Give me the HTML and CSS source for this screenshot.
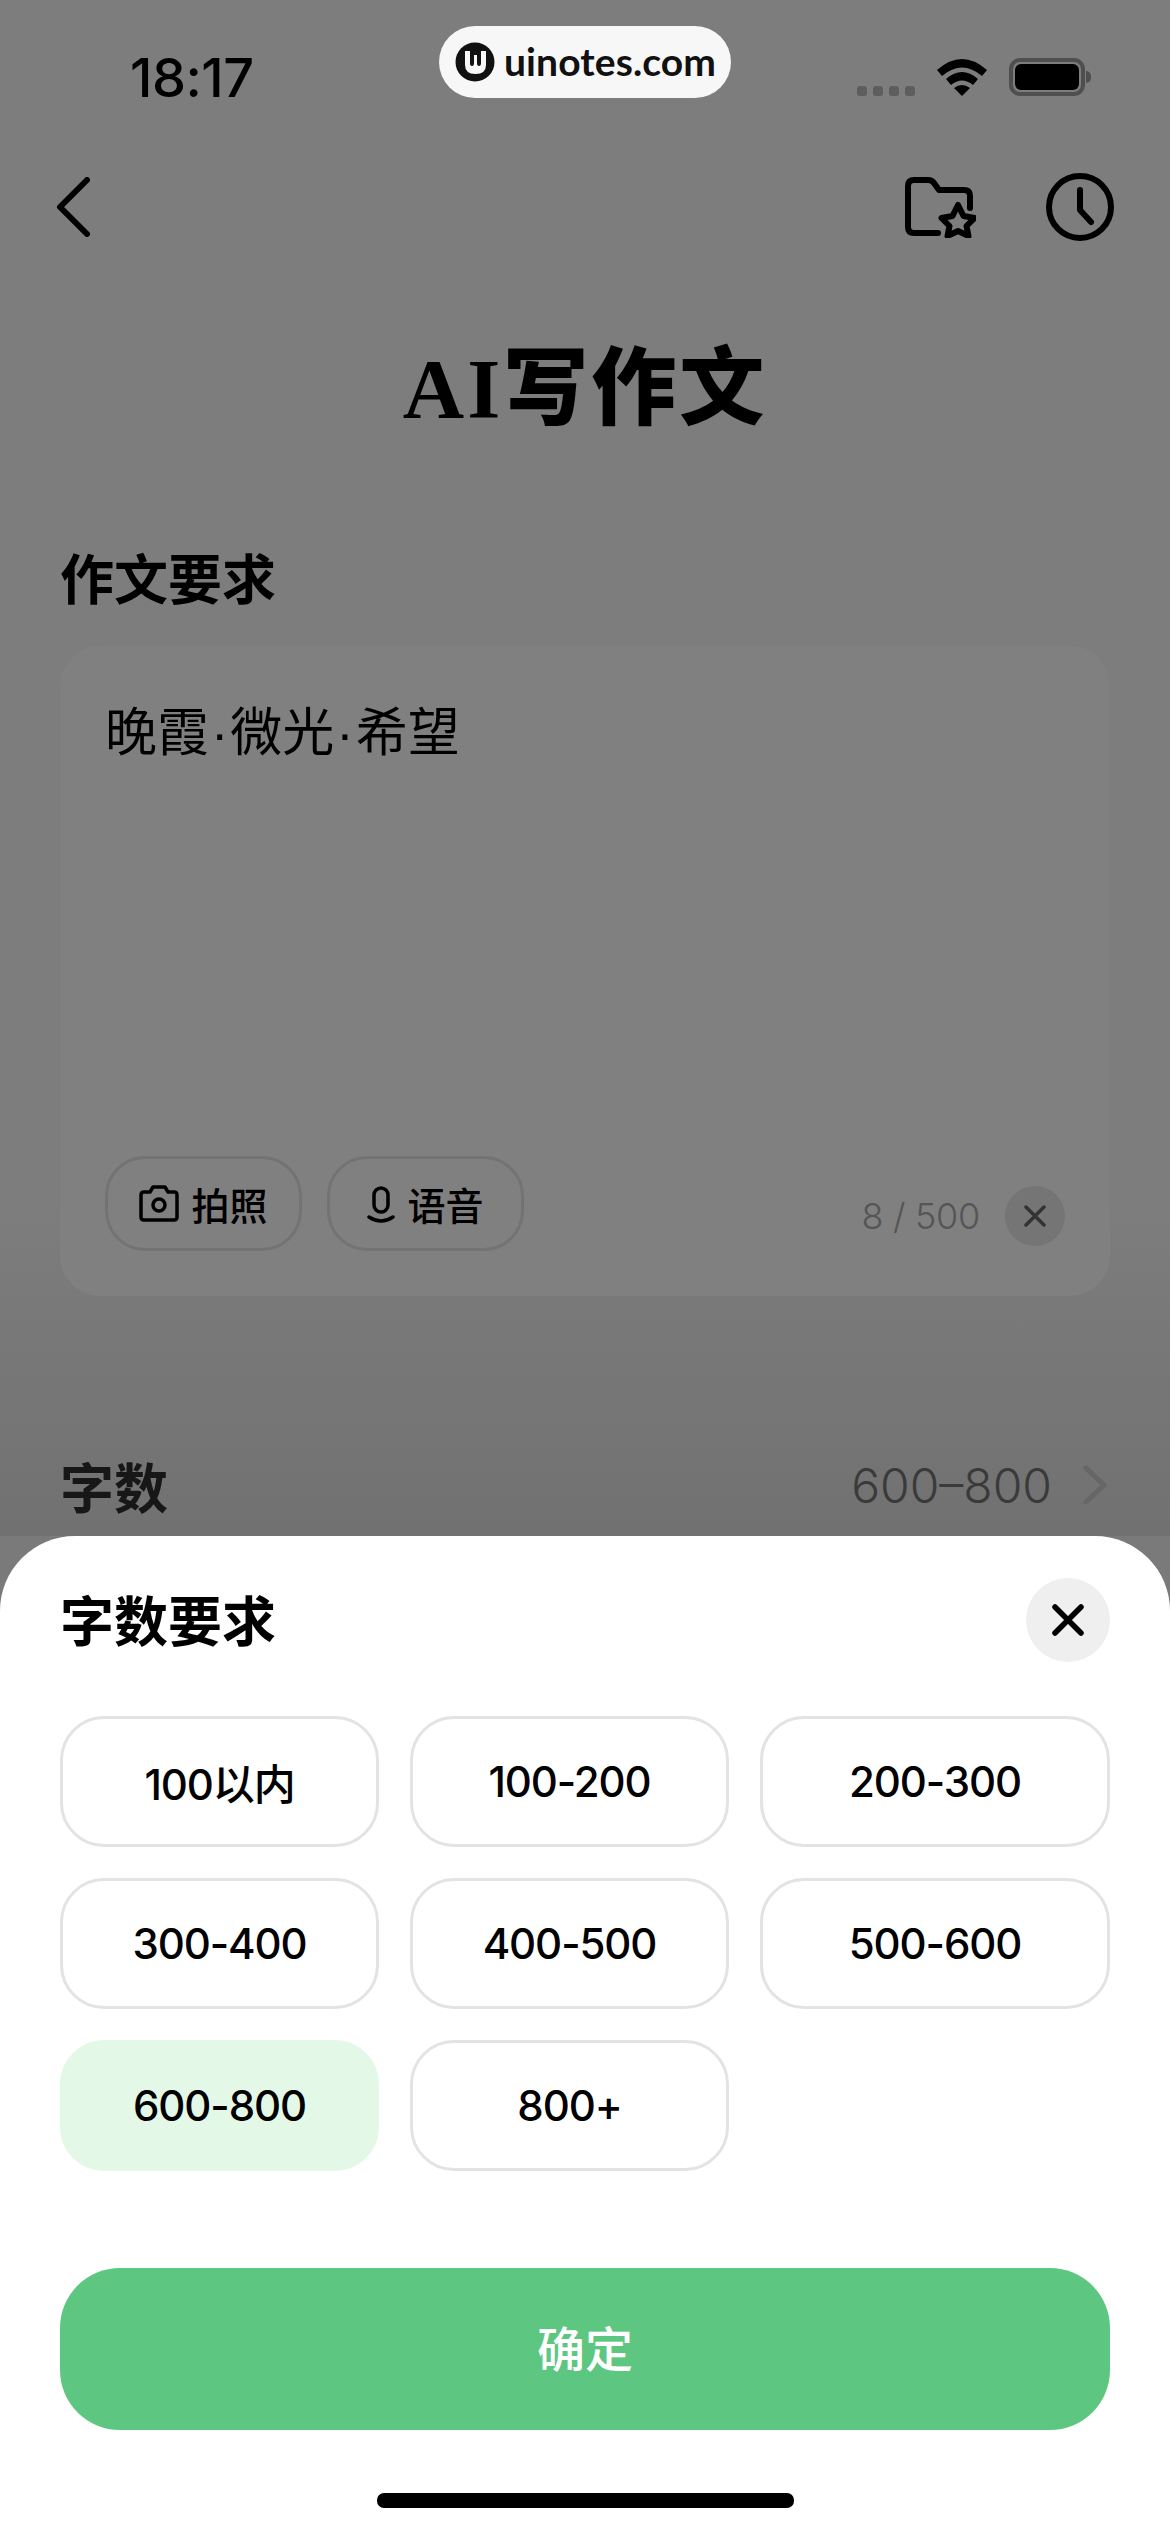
FILE: index.html
```html
<!DOCTYPE html>
<html lang="zh-CN">
<head>
<meta charset="utf-8">
<title>AI写作文</title>
<link rel="stylesheet" href="styles.css">
</head>
<body>
<div class="screen">
  <div class="page">
    <header class="status">
      <span class="time">18:17</span>
      <div class="mark"><svg class="mark-logo" viewBox="0 0 40 40"><circle cx="20" cy="20" r="19.5" fill="#111"/><path d="M10 9h5v12q0 3 2 3t2-3V13h3v8q0 3 2 3t2-3V9h5v14q0 9-10.500 9T10 23z" fill="#f7f7f7"/></svg><span>uinotes.com</span></div>
      <div class="status-icons">
        <div class="dots"><i></i><i></i><i></i><i></i></div>
        <svg class="wifi" viewBox="0 0 50 37"><path d="M0 11Q25-11 50 11l-5 6Q25 0 5 17z"/><path d="M9 20Q25 6 41 20l-5 6Q25 17 14 26z"/><path d="M17 29q8-6 16 0l-8 8z"/></svg>
        <div class="battery"><div class="battery-fill"></div></div>
        <div class="battery-cap"></div>
      </div>
    </header>
    <nav class="nav">
      <svg class="back" viewBox="0 0 34 60"><path d="M31 3 4 30l27 27"/></svg>
      <div class="nav-right">
        <svg class="folder" viewBox="0 0 71 61"><path d="M33 56H9q-6 0-6-6V9q0-6 6-6h14q4 0 6 3l5 7h25q6 0 6 6v12"/><path d="m53 28 5.500 11 11 2-8 8 2 10-10.500-5-10.500 5 2-10-8-8 11-2z"/></svg>
        <svg class="clock" viewBox="0 0 68 68"><circle cx="34" cy="34" r="31"/><path d="M34 17v20l11 12"/></svg>
      </div>
    </nav>
    <h1 class="title">AI写作文</h1>
    <h2 class="section">作文要求</h2>
    <div class="card">
      <p class="prompt">晚霞<b>·</b>微光<b>·</b>希望</p>
      <div class="card-foot">
        <button class="tool"><svg class="cam" viewBox="0 0 40 37"><path d="M5 7h6l3-5h12l3 5h6q3 0 3 3v22q0 3-3 3H5q-3 0-3-3V10q0-3 3-3z"/><circle cx="20" cy="20" r="6"/></svg>拍照</button>
        <button class="tool tool-voice"><svg class="mic" viewBox="0 0 28 38"><path d="M7 10a7 7 0 0 1 14 0v10a7 7 0 0 1-14 0z"/><path d="M2 32q12 8 24 0"/></svg>语音</button>
        <span class="count">8 / 500</span>
        <span class="clear"><svg viewBox="0 0 22 22"><path d="m2 2 18 18M20 2 2 20"/></svg></span>
      </div>
    </div>
    <div class="row">
      <span class="row-label">字数</span>
      <span class="row-value">600–800</span>
      <svg class="chev" viewBox="0 0 24 40"><path d="m3 3 18 17L3 37"/></svg>
    </div>
  </div>
  <section class="sheet">
    <div class="sheet-head">
      <h2 class="sheet-title">字数要求</h2>
      <span class="close"><svg viewBox="0 0 32 32"><path d="m3 3 26 26M29 3 3 29"/></svg></span>
    </div>
    <div class="options">
      <div class="opt">100以内</div>
      <div class="opt">100-200</div>
      <div class="opt">200-300</div>
      <div class="opt">300-400</div>
      <div class="opt">400-500</div>
      <div class="opt">500-600</div>
      <div class="opt opt-on">600-800</div>
      <div class="opt">800+</div>
    </div>
    <button class="ok">确定</button>
    <div class="home"></div>
  </section>
</div>
</body>
</html>
```
FILE: styles.css
```css
* { box-sizing: border-box; }
html, body { margin: 0; padding: 0; }
body { font-family: Inter, "Noto Sans CJK SC", sans-serif; background: #7a7a7a; }
h1, h2, p { margin: 0; font-weight: inherit; }
.screen { width: 1170px; height: 2532px; display: flex; flex-direction: column; overflow: hidden; }
.page { height: 1536px; flex: none; padding: 26px 60px 0; background: linear-gradient(#7d7d7d 0, #7d7d7d 1200px, #717171 1536px); }
.status { display: flex; align-items: flex-start; height: 72px; margin: 0 19px 0 0; }
.time { width: 380px; padding: 27px 0 0 70px; font-size: 54px; line-height: 50px; font-weight: 500; color: #000; letter-spacing: -.5px; }
.mark { width: 292px; height: 72px; flex: none; margin-left: -1px; border-radius: 36px; background: #f7f7f7; display: flex; align-items: center; gap: 9px; padding: 0 0 2px 16px; font-family: Lato, sans-serif; font-weight: 700; font-size: 39px; color: #111; letter-spacing: .1px; }
.mark-logo { width: 40px; height: 40px; flex: none; margin-top: 2px; }
.status-icons { display: flex; align-items: flex-end; margin-left: auto; height: 70px; }
.dots { display: flex; gap: 6px; margin-right: 22px; }
.dots i { width: 10px; height: 10px; border-radius: 3px; background: #5e5e5e; }
.wifi { width: 50px; height: 37px; fill: #000; margin-right: 22px; }
.battery { width: 76px; height: 38px; border: 4px solid #4f4f4f; border-radius: 11px; padding: 2px; }
.battery-fill { height: 100%; background: #000; border-radius: 6px; }
.battery-cap { width: 5px; height: 12px; margin: 0 0 13px 1px; background: #4f4f4f; border-radius: 0 6px 6px 0; }
.nav { display: flex; align-items: center; justify-content: space-between; height: 70px; margin: 74px -4px 0 -4px; }
.back { width: 34px; height: 60px; fill: none; stroke: #000; stroke-width: 6; stroke-linecap: round; stroke-linejoin: round; }
.nav-right { display: flex; align-items: center; gap: 70px; }
.folder { width: 71px; height: 61px; fill: none; stroke: #000; stroke-width: 6; stroke-linecap: round; stroke-linejoin: round; }
.clock { width: 68px; height: 68px; fill: none; stroke: #000; stroke-width: 6; stroke-linecap: round; stroke-linejoin: round; }
.title { margin-top: 97px; text-align: center; font-family: "Liberation Serif", "Noto Sans CJK SC", serif; font-weight: 900; font-size: 85px; line-height: 100px; letter-spacing: 3px; color: #000; }
.section { margin-top: 107px; font-size: 54px; line-height: 70px; font-weight: 700; color: #000; }
.card { height: 650px; margin-top: 30px; padding: 52px 45px 45px 45px; border-radius: 40px; background: #808080; display: flex; flex-direction: column; justify-content: space-between; }
.prompt { font-size: 52px; line-height: 70px; color: #000; }
.prompt b { font-weight: 400; font-family: "Liberation Sans", sans-serif; padding: 0 2px; }
.card-foot { display: flex; align-items: flex-end; gap: 25px; }
.tool { width: 197px; height: 95px; border: 3px solid #737373; border-radius: 40px; background: transparent; padding: 0; display: flex; align-items: center; justify-content: center; gap: 12px; font-family: inherit; font-size: 38px; color: #000; font-weight: 500; }
.cam { width: 40px; height: 37px; fill: none; stroke: #000; stroke-width: 3.500; stroke-linecap: round; stroke-linejoin: round; }
.mic { width: 28px; height: 38px; fill: none; stroke: #000; stroke-width: 3.500; stroke-linecap: round; }
.count { margin-left: auto; margin-bottom: 5px; font-size: 36px; line-height: 60px; font-weight: 300; color: #555; letter-spacing: -.3px; }
.clear { width: 60px; height: 60px; margin-bottom: 5px; border-radius: 50%; background: #757575; display: flex; align-items: center; justify-content: center; }
.clear svg { width: 22px; height: 22px; fill: none; stroke: #333; stroke-width: 3.500; stroke-linecap: round; }
.row { display: flex; align-items: center; margin-top: 154px; height: 70px; }
.row-label { font-size: 54px; font-weight: 700; color: #171717; }
.row-value { margin-left: auto; font-size: 48px; font-weight: 300; color: #3a3a3a; }
.chev { width: 24px; height: 40px; margin-left: 31px; margin-right: 3px; fill: none; stroke: #666; stroke-width: 5; stroke-linecap: round; stroke-linejoin: round; }
.sheet { flex: 1; background: #fff; border-radius: 75px 75px 0 0; padding: 42px 60px 0; display: flex; flex-direction: column; }
.sheet-head { display: flex; align-items: center; justify-content: space-between; height: 84px; }
.sheet-title { font-size: 54px; font-weight: 700; color: #000; margin-top: -4px; }
.close { width: 84px; height: 84px; border-radius: 50%; background: #efefef; display: flex; align-items: center; justify-content: center; }
.close svg { width: 32px; height: 32px; fill: none; stroke: #000; stroke-width: 5.500; stroke-linecap: round; }
.options { display: grid; grid-template-columns: 319px 319px 1fr; grid-auto-rows: 131px; gap: 31px 31px; margin-top: 54px; }
.opt { border: 3px solid #e3e3e3; border-radius: 44px; display: flex; align-items: center; justify-content: center; font-size: 42px; font-weight: 500; color: #000; letter-spacing: -1.1px; }
.opt-on { background: #e3f8e6; border-color: #e3f8e6; }
.ok { height: 162px; margin-top: 97px; border: 0; border-radius: 60px; padding: 0 0 6px; background: #5dc680; color: #fff; font-family: inherit; font-size: 48px; font-weight: 500; }
.home { width: 417px; height: 15px; margin: 63px auto 0; border-radius: 7px; background: #000; }
```
